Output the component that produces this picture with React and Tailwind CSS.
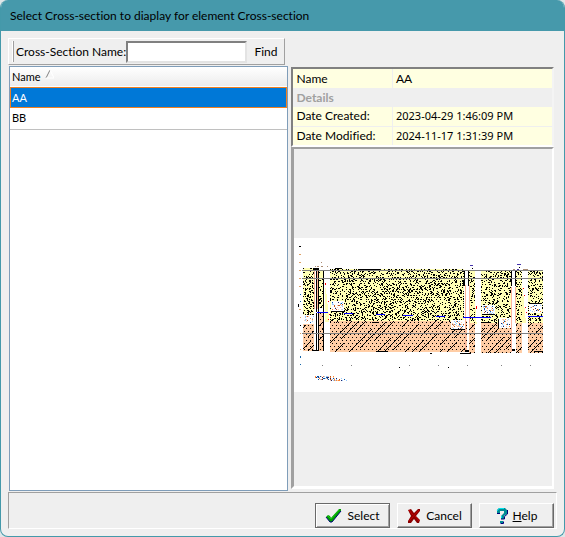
import React, { useState } from 'react';

const sections = ['AA', 'BB'];

const details = {
  AA: { created: '2023-04-29 1:46:09 PM', modified: '2024-11-17 1:31:39 PM' },
  BB: { created: '2023-04-29 1:46:09 PM', modified: '2024-11-17 1:31:39 PM' }
};

// upper layer blocks: x, y, width, height, dot density
const soil = [
  [9, 30, 11, 47, 0.32],
  [25, 32, 4, 38, 0.24],
  [36, 31, 134, 52, 0.32],
  [175, 32, 6, 53, 0.26],
  [187, 32, 30, 53, 0.28],
  [222, 32, 6, 53, 0.26],
  [234, 32, 15, 53, 0.32]
];

// lower layer blocks: x, y, width, height
const rock = [
  [9, 86, 11, 27],
  [25, 75, 4, 38],
  [36, 83, 137, 31],
  [175, 85, 6, 30],
  [187, 85, 30, 30],
  [222, 85, 6, 30],
  [234, 85, 15, 30]
];

const labels = [
  [37, 63, 13, 10],
  [157, 82, 14, 10],
  [188, 67, 13, 10],
  [205, 80, 12, 10],
  [235, 66, 13, 9],
  [9, 77, 12, 9]
];

const waterLines = [
  [23, 74, 11],
  [50, 75, 9],
  [82, 76, 9],
  [109, 77, 10],
  [142, 78, 9],
  [169, 79, 28],
  [234, 78, 15]
];

const colors = ['#0055aa', '#ff8833', '#222266', '#99ccff', '#bb5522', '#ffccaa', '#99ccff', '#ffccaa'];

function makeRandom(seed) {
  let s = seed;
  return () => {
    s = (s * 16807) % 2147483647;
    return s / 2147483647;
  };
}

function soilDots() {
  const rand = makeRandom(4711);
  let d = '';
  soil.forEach(([x, y, w, h, density]) => {
    for (let j = 0; j < h; j++) {
      const rowDensity = j % 2 ? density * 0.6 : density * 1.1;
      let i = 0;
      while (i < w) {
        if (rand() < rowDensity) {
          const run = Math.min(rand() < 0.35 ? 2 : 1, w - i);
          d += `M${x + i} ${y + j}h${run}v1h-${run}z`;
          i += run;
        }
        i++;
      }
    }
  });
  return d;
}

function rockDots() {
  let d = '';
  rock.forEach(([x, y, w, h]) => {
    for (let j = 0; j < h; j++) {
      for (let i = 0; i < w; i++) {
        const gx = x + i;
        const gy = y + j;
        const dot = gy % 3 === 0 && gx % 4 === (gy % 6 === 0 ? 0 : 2);
        const hatch = (gx + gy) % 7 === 0 && (gx + gy) % 28 < 20 && (gx + gy * 2) % 37 < 26;
        if (dot || hatch) d += `M${gx} ${gy}h1v1h-1z`;
      }
    }
  });
  return d;
}

function speckles(boxes, seed, density) {
  const rand = makeRandom(seed);
  const out = [];
  boxes.forEach(([x, y, w, h]) => {
    for (let j = 1; j < h - 1; j++) {
      for (let i = 1; i < w - 1; i++) {
        if (rand() < density) out.push([x + i, y + j, colors[Math.floor(rand() * colors.length)]]);
      }
    }
  });
  return out;
}

const soilPath = soilDots();
const rockPath = rockDots();
const labelSpecks = speckles(labels, 99, 0.3);
const captionSpecks = speckles([[20, 137, 22, 6], [34, 139, 20, 5]], 321, 0.4);

function CrossSectionPreview() {
  return (
    <svg viewBox="0 0 258 154" className="block w-full bg-white" shapeRendering="crispEdges" role="img" aria-label="Cross-section preview">
      {soil.map(([x, y, w, h]) => (
        <rect key={x} x={x} y={y} width={w} height={h} fill="#ffffb5" />
      ))}
      {rock.map(([x, y, w, h]) => (
        <rect key={x} x={x} y={y} width={w} height={h} fill="#ffcda5" />
      ))}
      <path d="M31 50h1v6h1v10h1v8h1v10h-4zM181 70h1v14h1v2h-2zM228 50h1v8h1v12h1v10h1v5h-4z" fill="#ffffb5" />
      <path d={soilPath} />
      <path d={rockPath} />

      {/* wells */}
      <path d="M20 32h5v83h-5zM173 33h2v82h-2zM218 33h3v82h-3z" fill="#fff" />
      <path d="M20 33h1v38h-1zM23 33h1v38h-1zM171 47h1v65h-1zM175 47h1v38h-1zM217 49h1v65h-1zM221 49h1v36h-1z" fill="#ffb59c" />
      <path d="M19 30h6v2h-6zM22 32h1v42h-1zM24 32h1v81h-1zM29 32h1v81h-1zM22 75h1v37h-1zM18 112h7v1h-7zM165 32h11v1h-11zM170 33h1v15h-1zM174 33h1v15h-1zM171 112h4v2h-4zM166 115h11v1h-11zM217 32h5v1h-5zM217 33h1v15h-1zM221 33h1v15h-1zM218 111h3v2h-3z" />
      <path d="M41 30h7v1h-7zM64 31h23v1h-23zM185 32h13v1h-13zM78 84h6v1h-6zM82 113h12v1h-12zM187 84h10v1h-10zM240 113h9v1h-9zM136 115h2v1h-2z" />

      {labels.map(([x, y, w, h]) => (
        <rect key={`${x}-${y}`} x={x} y={y} width={w} height={h} fill="#fff" />
      ))}
      {labelSpecks.map(([x, y, fill]) => (
        <rect key={`${x}-${y}`} x={x} y={y} width="1" height="1" fill={fill} />
      ))}
      <path d="M37 73h14v1h-14zM157 91h14v1h-14zM188 76h13v1h-13zM204 81h1v10h-1zM235 65h13v1h-13z" />

      <path d="M8 32h241v1h-241zM8 40h241v1h-241zM8 95h241v1h-241z" fill="#808080" />
      {waterLines.map(([x, y, w]) => (
        <rect key={x} x={x} y={y} width={w} height="1" fill="#00f" />
      ))}
      <path d="M31 45h1v2h-1zM34 63h1v1h-1zM35 76h1v1h-1zM34 81h1v1h-1zM182 68h1v3h-1zM229 50h1v1h-1zM230 57h1v1h-1zM231 69h1v1h-1zM232 74h1v1h-1z" fill="#f00" />

      {/* depth scale */}
      <path d="M5 16h2v1h-2zM5 24h2v1h-2zM5 32h2v1h-2zM5 40h2v1h-2zM5 48h2v1h-2zM5 71h2v1h-2zM6 79h1v1h-1zM6 95h1v1h-1zM6 111h1v1h-1z" fill="#dda066" />
      <path d="M5 8h2v1h-2zM4 66h1v3h-1zM6 87h1v1h-1zM105 129h1v1h-1zM154 129h1v1h-1zM178 30h1v1h-1zM225 29h1v1h-1z" />
      <path d="M6 56h1v1h-1zM6 63h1v1h-1zM6 118h1v2h-1zM6 126h1v1h-1z" fill="#1565a8" />
      <path d="M28 127h1v1h-1zM57 127h1v1h-1zM115 127h1v1h-1zM144 127h1v1h-1zM173 127h1v1h-1zM207 127h1v1h-1zM236 127h1v1h-1z" fill="#808080" />
      <path d="M21 28h1v1h-1zM23 28h2v1h-2zM27 28h2v1h-2zM33 28h1v1h-1zM27 24h1v1h-1zM219 31h2v1h-2zM229 31h5v1h-5z" fill="#a98b73" />
      <path d="M176 27h3v1h-3zM223 26h4v1h-4zM223 31h2v1h-2z" fill="#4433aa" />
      {captionSpecks.map(([x, y, fill], i) => (
        <rect key={i} x={x} y={y} width="1" height="1" fill={fill} />
      ))}
    </svg>
  );
}

function CheckIcon() {
  return (
    <svg viewBox="0 0 17 16" className="h-4 w-[17px]" aria-hidden="true">
      <path d="M1 9l2-2 2 1 1 2 8-9h2v2L7 14H5z" fill="#00a000" />
      <path d="M1 9l4 5h2l9-11" fill="none" stroke="#00007b" strokeWidth="1" />
      <path d="M3 8l3 3 8-9" fill="none" stroke="#18c818" strokeWidth="1" />
    </svg>
  );
}

function CrossIcon() {
  return (
    <svg viewBox="0 0 14 16" className="h-4 w-[14px]" aria-hidden="true">
      <path d="M1 2l3-1 3 4 4-4h2v2L9 8l4 4-1 3h-2l-3-4-3 4H1v-2l3-5z" fill="#8b0000" />
      <path d="M2 2l4 5M12 2L2 13M8 8l4 5" fill="none" stroke="#c80000" strokeWidth="1" />
    </svg>
  );
}

function QuestionIcon() {
  return (
    <svg viewBox="0 0 12 17" className="h-[17px] w-3" aria-hidden="true">
      <path d="M1 3l2-2h6l2 2v4L8 9v3H5V9l3-3V4H4v2H1z" fill="#008c94" />
      <path d="M1 6.500h3M11.500 3v4L8.500 9.500v2.500H5M4.500 16.500h3v-2" fill="none" stroke="#00007b" strokeWidth="1" />
      <path d="M4 14h3v2H4z" fill="#008c94" />
      <path d="M1 4l2-2.500h5M5.500 11V9" fill="none" stroke="#00e5ee" strokeWidth="1" />
    </svg>
  );
}

function DialogButton({ icon, children, isDefault }) {
  return (
    <button
      type="button"
      className={
        isDefault
          ? 'flex h-[25px] w-[75px] items-center justify-center gap-[5px] border border-[#696969] bg-[#efefef] shadow-[inset_1px_1px_0_#fff,inset_-1px_-1px_0_#a0a0a0]'
          : 'flex h-[25px] w-[75px] items-center justify-center gap-[5px] border border-t-white border-l-white border-r-[#696969] border-b-[#696969] bg-[#efefef] shadow-[inset_-1px_-1px_0_#a0a0a0]'
      }
    >
      {icon}
      <span>{children}</span>
    </button>
  );
}

export default function App() {
  const [selected, setSelected] = useState('AA');
  const [search, setSearch] = useState('');

  const handleFind = (e) => {
    e.preventDefault();
    const match = sections.find((s) => s.toLowerCase().includes(search.toLowerCase()));
    if (match) setSelected(match);
  };

  return (
    <div className="h-screen bg-[#dfe6e8]">
      <div className="flex h-full flex-col overflow-hidden rounded-lg border border-t-0 border-[#4499aa] bg-[#efefef] font-['Lato',sans-serif] text-[12px] leading-4 text-black [font-variant-ligatures:none]">
        <header className="flex h-[31px] shrink-0 items-center bg-[#4699ab] px-[9px]">
          <h1>Select Cross-section to diaplay for element Cross-section</h1>
        </header>

        <main className="flex min-h-0 flex-1 gap-[3px] pt-[7px] pr-[10px] pl-[7px]">
          <div className="flex min-w-0 flex-[281] flex-col">
            <form
              onSubmit={handleFind}
              className="mr-[3px] flex h-[27px] shrink-0 items-center border border-t-white border-l-white border-r-[#a0a0a0] border-b-[#a0a0a0] pl-[3px]"
            >
              <span className="mr-[2px] h-[21px] w-[2px] border-l border-white bg-[#a0a0a0]" />
              <label htmlFor="section-name" className="shrink-0 whitespace-nowrap">Cross-Section Name:</label>
              <input
                id="section-name"
                type="text"
                value={search}
                onChange={(e) => setSearch(e.target.value)}
                className="h-[22px] min-w-0 flex-1 border-2 border-t-[#808080] border-l-[#808080] border-r-[#e3e3e3] border-b-[#e3e3e3] bg-white px-1 outline-none"
              />
              <button type="submit" className="px-[7px]">Find</button>
            </form>

            <div className="mt-px ml-px flex-1 border border-[#7f9db9] bg-white text-[11px]">
              <table className="w-full border-collapse">
                <thead>
                  <tr className="h-5 border-b border-[#808080] bg-linear-to-b from-white to-[#ececec]">
                    <th className="px-[2px] text-left font-normal">
                      <span className="flex items-center gap-1">
                        Name
                        <svg viewBox="0 0 9 9" className="mb-1 h-[9px] w-[9px]" aria-hidden="true">
                          <path d="M1 8L5 0" stroke="#808080" fill="none" />
                          <path d="M5 0l4 8H1" stroke="#fff" fill="none" />
                        </svg>
                      </span>
                    </th>
                  </tr>
                </thead>
                <tbody>
                  {sections.map((name) => (
                    <tr
                      key={name}
                      onClick={() => setSelected(name)}
                      className={
                        name === selected
                          ? 'h-[21px] bg-[#0078d7] text-white outline outline-1 -outline-offset-1 outline-[#f08020]'
                          : 'h-[21px] border-b border-[#c0c0c0]'
                      }
                    >
                      <td className="px-[2px]">{name}</td>
                    </tr>
                  ))}
                </tbody>
              </table>
            </div>
          </div>

          <div className="flex min-w-0 flex-[263] flex-col pt-[29px]">
            <div className="border-2 border-t-[#808080] border-l-[#808080] border-r-[#f4f4f4] border-b-white">
              <table className="w-full table-fixed border-collapse bg-[#ffffe1] text-left">
                <tbody>
                  <tr className="h-[19px]">
                    <th className="w-[99px] border-r border-[#efefef] pl-[3px] font-normal">Name</th>
                    <td className="pl-[3px]">{selected}</td>
                  </tr>
                  <tr className="h-[19px] bg-[#efefef] text-[#a0a0a0]">
                    <th colSpan={2} className="pl-[3px] font-bold">Details</th>
                  </tr>
                  <tr className="h-[19px] border-b border-[#efefef]">
                    <th className="border-r border-[#efefef] pl-[3px] font-normal">Date Created:</th>
                    <td className="pl-[3px] font-['Noto_Sans',sans-serif] text-[11px]">{details[selected].created}</td>
                  </tr>
                  <tr className="h-[19px]">
                    <th className="border-r border-[#efefef] pl-[3px] font-normal">Date Modified:</th>
                    <td className="pl-[3px] font-['Noto_Sans',sans-serif] text-[11px]">{details[selected].modified}</td>
                  </tr>
                </tbody>
              </table>
            </div>
            <div className="mb-[2px] flex flex-1 items-center border-t-2 border-r-2 border-b-[3px] border-l-[3px] border-t-[#a0a0a0] border-r-white border-b-white border-l-[#a0a0a0] pb-[5px]">
              <CrossSectionPreview />
            </div>
          </div>
        </main>

        <footer className="mt-px mr-[7px] mb-[7px] ml-[7px] flex h-[37px] shrink-0 items-end justify-end gap-[7px] border border-t-[#a0a0a0] border-l-[#a0a0a0] border-r-white border-b-white pr-[2px]">
          <DialogButton icon={<CheckIcon />} isDefault>Select</DialogButton>
          <DialogButton icon={<CrossIcon />}>Cancel</DialogButton>
          <DialogButton icon={<QuestionIcon />}><u>H</u>elp</DialogButton>
        </footer>
      </div>
    </div>
  );
}
